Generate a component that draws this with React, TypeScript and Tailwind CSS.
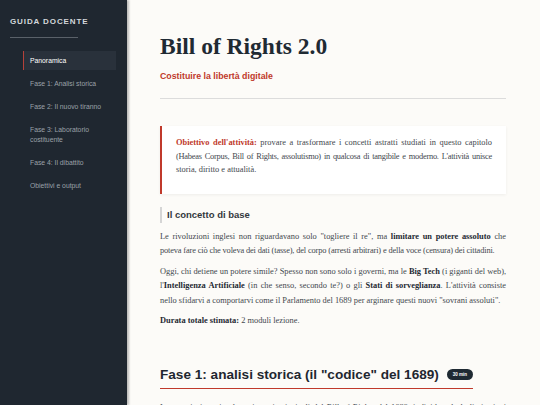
const navItems = [
  'Panoramica',
  'Fase 1: Analisi storica',
  'Fase 2: Il nuovo tiranno',
  'Fase 3: Laboratorio costituente',
  'Fase 4: Il dibattito',
  'Obiettivi e output',
];

function Sidebar() {
  return (
    <aside className="relative z-10 flex w-[127px] shrink-0 flex-col bg-[#1f2730] pt-[17px] shadow-[2px_0_2px_rgba(0,0,0,0.25)] font-['Liberation_Sans',sans-serif]">
      <div className="px-[10px]">
        <h2 className="text-[8px] font-bold uppercase leading-[10px] tracking-[0.9px] text-[#d3d7db]">
          Guida docente
        </h2>
        <div className="mt-[10px] h-px w-[68px] bg-[#5a6169]" />
      </div>
      <nav className="ml-[23px] mr-[11px] mt-[13px] flex flex-col gap-[4px]">
        {navItems.map((item, i) => (
          <a
            key={item}
            className={`block border-l py-[4.5px] pl-[6px] pr-[8px] text-[6.8px] leading-[10px] ${
              i === 0
                ? 'border-[#b5413a] bg-[#29313b] text-white'
                : 'border-transparent text-[#9ba1a8]'
            }`}
          >
            {i === 3 ? (
              <>
                Fase 3: Laboratorio
                <br />
                costituente
              </>
            ) : (
              item
            )}
          </a>
        ))}
      </nav>
    </aside>
  );
}

function App() {
  return (
    <div className="flex h-[405px] w-[540px] overflow-hidden bg-[#fcfbf8]">
      <Sidebar />
      <main className="flex-1 overflow-hidden pl-[33px] pr-[34px] pt-[31px]">
        <h1 className="text-[23.5px] font-bold leading-[30px] text-[#1f2a33] font-['Liberation_Serif',serif]">
          Bill of Rights 2.0
        </h1>
        <p className="mt-[10px] text-[8.8px] font-bold leading-[10px] text-[#c0392b] font-['Liberation_Sans',sans-serif]">
          Costituire la libertà digitale
        </p>
        <hr className="mt-[17px] border-0 border-t border-[#dcdcdc]" />

        <div className="mt-[27px] border-l-2 border-[#c0392b] bg-white px-[14px] pb-[17px] pt-[10px] shadow-[0_1px_3px_rgba(0,0,0,0.06)] font-['Liberation_Serif',serif]">
          <p className="text-justify text-[8.4px] leading-[13.5px] text-[#43484e]">
            <strong className="font-bold text-[#c0392b]">Obiettivo dell'attività:</strong> provare a
            trasformare i concetti astratti studiati in questo capitolo{' '}
            <span className="tracking-[-0.25px]">
              (Habeas Corpus, Bill of Rights, assolutismo) in qualcosa di tangibile e moderno.
              L'attività unisce
            </span>{' '}
            storia, diritto e attualità.
          </p>
        </div>

        <h3 className="mt-[13px] border-l-2 border-[#d5d5d5] pl-[5px] text-[9.5px] font-bold leading-[16px] text-[#33383d] font-['Liberation_Sans',sans-serif]">
          Il concetto di base
        </h3>

        <div className="font-['Liberation_Serif',serif] text-[8.4px] leading-[14.5px] text-[#43484e]">
          <p className="mt-[7px] text-justify">
            Le rivoluzioni inglesi non riguardavano solo "togliere il re", ma{' '}
            <strong className="text-[#1f2a33]">limitare un potere assoluto</strong> che{' '}
            <span className="tracking-[-0.15px]">
              poteva fare ciò che voleva dei dati (tasse), del corpo (arresti arbitrari) e della
              voce (censura) dei cittadini.
            </span>
          </p>
          <p className="mt-[6px] text-justify">
            Oggi, chi detiene un potere simile? Spesso non sono solo i governi, ma le{' '}
            <strong className="text-[#1f2a33]">Big Tech</strong> (i giganti del web), l'
            <strong className="text-[#1f2a33]">Intelligenza Artificiale</strong> (in che senso,
            secondo te?) o gli <strong className="text-[#1f2a33]">Stati di sorveglianza</strong>.
            L'attività consiste nello sfidarvi a comportarvi come il Parlamento del 1689 per
            arginare questi nuovi "sovrani assoluti".
          </p>
          <p className="mt-[6px]">
            <strong className="text-[#1f2a33]">Durata totale stimata:</strong> 2 moduli lezione.
          </p>
        </div>

        <div className="mt-[37px] inline-flex items-center gap-[8px] border-b border-[#c0392b] pb-[4px]">
          <h2 className="text-[13.6px] font-bold leading-[18px] text-[#1f2730] font-['Liberation_Sans',sans-serif]">
            Fase 1: analisi storica (il "codice" del 1689)
          </h2>
          <span className="rounded-full bg-[#1f2a33] px-[6px] py-[2.5px] text-[4.5px] font-bold leading-[6px] text-white font-['Liberation_Sans',sans-serif]">
            30 min
          </span>
        </div>

        <p className="mt-[12px] text-justify font-['Liberation_Serif',serif] text-[8.4px] leading-[14.5px] text-[#43484e]">
          Leggete insieme in classe i punti principali del Bill of Rights del 1689, individuando le
          limitazioni imposte al potere del sovrano e i diritti riconosciuti al Parlamento.
        </p>
      </main>
    </div>
  );
}

export default App;
